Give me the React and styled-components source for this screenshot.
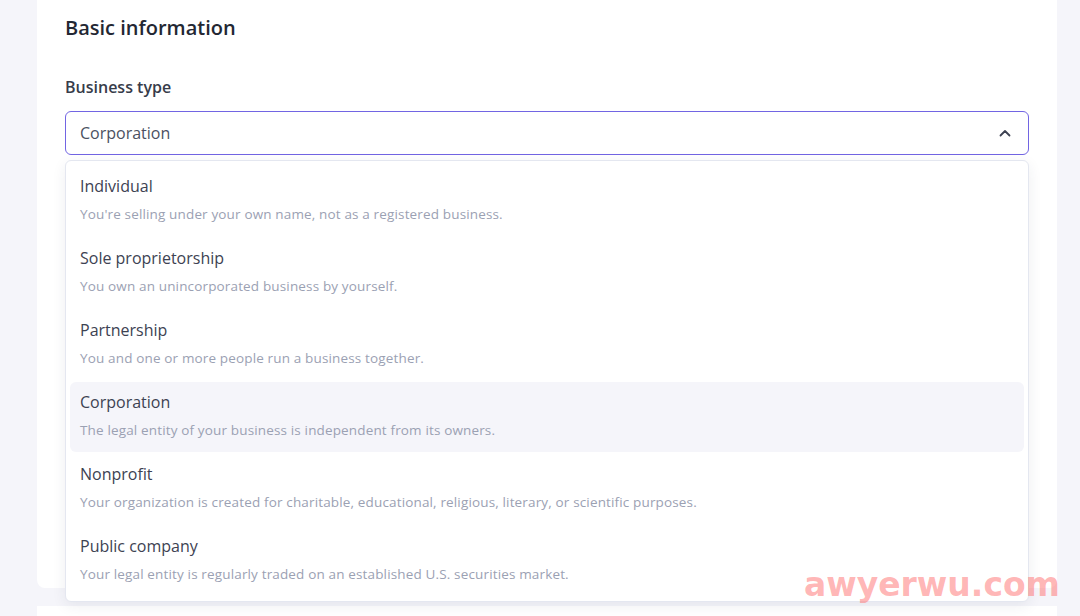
import React, { useState } from 'react';
import styled, { createGlobalStyle } from 'styled-components';

const GlobalStyle = createGlobalStyle`
  html, body {
    margin: 0;
    padding: 0;
    background: #f5f5fa;
    font-family: "Open Sans", Lato, sans-serif;
    overflow: hidden;
  }
`;

const Page = styled.div`
  width: 1080px;
  height: 616px;
  padding: 0 23px 0 37px;
  box-sizing: border-box;
  display: flex;
  flex-direction: column;
  gap: 18px;
  position: relative;
`;

const Card = styled.section`
  background: #ffffff;
  border-radius: 0 0 8px 8px;
  padding: 14px 28px 0;
  height: ${(p) => p.$height}px;
  box-sizing: border-box;
  flex-shrink: 0;
`;

const Title = styled.h2`
  margin: 0;
  font-size: 20px;
  font-weight: 600;
  color: #232733;
  line-height: 28px;
`;

const Field = styled.div`
  margin-top: 34px;
  position: relative;
`;

const Label = styled.label`
  display: block;
  font-size: 16px;
  font-weight: 600;
  color: #373c4a;
  line-height: 22px;
  margin-bottom: 13px;
`;

const SelectBox = styled.button`
  width: 100%;
  height: 44px;
  box-sizing: border-box;
  border: 1.5px solid #7265e3;
  border-radius: 6px;
  background: #fff;
  display: flex;
  align-items: center;
  justify-content: space-between;
  padding: 0 16px 0 14px;
  font-family: inherit;
  font-size: 16px;
  color: #4b5162;
  cursor: pointer;
`;

const Menu = styled.ul`
  position: absolute;
  top: 84px;
  left: 0;
  right: 0;
  margin: 0;
  padding: 5px 4px;
  list-style: none;
  background: #fff;
  border: 1px solid #e4e7f0;
  border-radius: 6px;
  box-shadow: 0 4px 14px rgba(40, 45, 80, 0.08);
  display: flex;
  flex-direction: column;
  gap: 2px;
  z-index: 2;
`;

const Option = styled.li`
  height: 70px;
  box-sizing: border-box;
  padding: 10px 10px 0;
  border-radius: 6px;
  background: ${(p) => (p.$active ? '#f5f5fa' : 'transparent')};
  cursor: pointer;
`;

const OptionName = styled.div`
  font-size: 16px;
  color: #3d4252;
  line-height: 21px;
`;

const OptionDesc = styled.div`
  margin-top: 8px;
  font-size: 13.5px;
  letter-spacing: 0.15px;
  color: #9ba1b3;
  line-height: 18px;
`;

const Watermark = styled.div`
  position: absolute;
  right: 20px;
  bottom: 12px;
  font-family: "DejaVu Sans", sans-serif;
  font-weight: 700;
  font-size: 33px;
  color: rgba(255, 120, 120, 0.55);
  pointer-events: none;
  z-index: 3;
`;

const options = [
  ['Individual', "You're selling under your own name, not as a registered business."],
  ['Sole proprietorship', 'You own an unincorporated business by yourself.'],
  ['Partnership', 'You and one or more people run a business together.'],
  ['Corporation', 'The legal entity of your business is independent from its owners.'],
  ['Nonprofit', 'Your organization is created for charitable, educational, religious, literary, or scientific purposes.'],
  ['Public company', 'Your legal entity is regularly traded on an established U.S. securities market.'],
];

function ChevronUp() {
  return (
    <svg width="14" height="14" viewBox="0 0 14 14" fill="none">
      <path d="M2.5 9.5L7 5L11.5 9.5" stroke="#3d4252" strokeWidth="1.8" strokeLinecap="round" strokeLinejoin="round" />
    </svg>
  );
}

export default function App() {
  const [value, setValue] = useState('Corporation');

  return (
    <>
      <GlobalStyle />
      <Page>
        <Card $height={588}>
          <Title>Basic information</Title>
          <Field>
            <Label>Business type</Label>
            <SelectBox>
              {value}
              <ChevronUp />
            </SelectBox>
            <Menu>
              {options.map(([name, desc]) => (
                <Option key={name} $active={name === value} onClick={() => setValue(name)}>
                  <OptionName>{name}</OptionName>
                  <OptionDesc>{desc}</OptionDesc>
                </Option>
              ))}
            </Menu>
          </Field>
        </Card>
        <Card $height={40} />
        <Watermark>awyerwu.com</Watermark>
      </Page>
    </>
  );
}
